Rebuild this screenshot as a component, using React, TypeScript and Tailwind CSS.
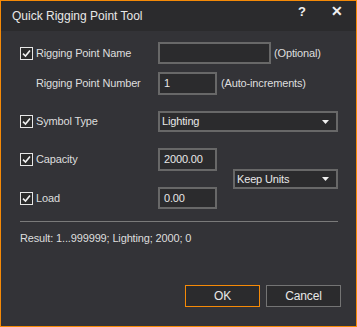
import React from "react";

const font = { fontFamily: '"Liberation Sans", Arial, sans-serif' };

function Check() {
  return (
    <span className="flex h-[13px] w-[13px] items-center justify-center border border-[#e6e6e6] bg-[#2b2b2b]">
      <svg width="11" height="11" viewBox="0 0 11 11">
        <path d="M2 5.6 L4.5 8 L9 2.5" fill="none" stroke="#f0f0f0" strokeWidth="1.6" />
      </svg>
    </span>
  );
}

function Caret() {
  return (
    <svg width="7" height="4" viewBox="0 0 7 4" className="mr-[7px]">
      <path d="M0 0 H7 L3.5 4 Z" fill="#f0f0f0" />
    </svg>
  );
}

function Box({ w, h, value }: { w: string; h: string; value?: string }) {
  return (
    <div className={`${w} ${h} flex items-center border-2 border-[#686868] bg-[#2b2b2d] pl-[4px] text-[#e8e8e8]`}>
      {value}
    </div>
  );
}

export default function App() {
  return (
    <div
      className="flex h-[327px] w-[357px] flex-col border border-[#f58a07] bg-[#333337] text-[11px] tracking-[-0.15px] text-[#dedede]"
      style={font}
    >
      <div className="flex h-[30px] shrink-0 items-center bg-[#2b2b2d] pl-[11px] pr-[13px] tracking-normal">
        <span className="text-[12px] text-[#e8e8e8]">Quick Rigging Point Tool</span>
        <span className="ml-auto mb-[9px] text-[13px] font-bold text-[#f0f0f0]">?</span>
        <span className="ml-[25px] mb-[9px] text-[14px] font-bold text-[#f0f0f0]">✕</span>
      </div>

      <div className="flex flex-col pl-[19px] pr-[18px]">
        <div className="mt-[11px] flex h-[22px] items-center">
          <div className="flex w-[138px] items-center gap-[3px]">
            <Check />
            <span>Rigging Point Name</span>
          </div>
          <Box w="w-[113px]" h="h-[22px]" />
          <span className="ml-[3px]">(Optional)</span>
        </div>

        <div className="mt-[8px] flex h-[23px] items-center">
          <div className="w-[138px] pl-[16px]">Rigging Point Number</div>
          <Box w="w-[59px]" h="h-[23px]" value="1" />
          <span className="ml-[4px]">(Auto-increments)</span>
        </div>

        <div className="mt-[16px] flex h-[21px] items-center">
          <div className="flex w-[138px] items-center gap-[3px]">
            <Check />
            <span>Symbol Type</span>
          </div>
          <div className="flex h-[21px] w-[180px] items-center justify-between border-2 border-[#686868] bg-[#2b2b2d] pl-[2px] text-[#e8e8e8]">
            <span>Lighting</span>
            <Caret />
          </div>
        </div>

        <div className="mt-[16px] flex items-center">
          <div className="flex flex-col">
            <div className="flex h-[23px] items-center">
              <div className="flex w-[138px] items-center gap-[3px]">
                <Check />
                <span>Capacity</span>
              </div>
              <Box w="w-[59px]" h="h-[23px]" value="2000.00" />
            </div>
            <div className="mt-[16px] flex h-[22px] items-center">
              <div className="flex w-[138px] items-center gap-[3px]">
                <Check />
                <span>Load</span>
              </div>
              <Box w="w-[59px]" h="h-[22px]" value="0.00" />
            </div>
          </div>
          <div className="ml-[16px] mt-[1px] flex h-[20px] w-[105px] items-center justify-between border-2 border-[#686868] bg-[#2b2b2d] pl-[2px] text-[#e8e8e8]">
            <span>Keep Units</span>
            <Caret />
          </div>
        </div>

        <div className="mt-[12px] h-[1px] bg-[#7a7a7a]" />

        <div className="mt-[8px]">Result: 1...999999; Lighting; 2000; 0</div>
      </div>

      <div className="mt-auto mb-[19px] flex justify-end gap-[6px] pr-[15px]">
        <button className="flex h-[22px] w-[75px] items-center justify-center border border-[#f58a07] bg-[#2b2b2d] text-[12px] text-[#e8e8e8]">
          OK
        </button>
        <button className="flex h-[22px] w-[75px] items-center justify-center border border-[#747474] bg-[#2b2b2d] text-[12px] text-[#e8e8e8]">
          Cancel
        </button>
      </div>
    </div>
  );
}
